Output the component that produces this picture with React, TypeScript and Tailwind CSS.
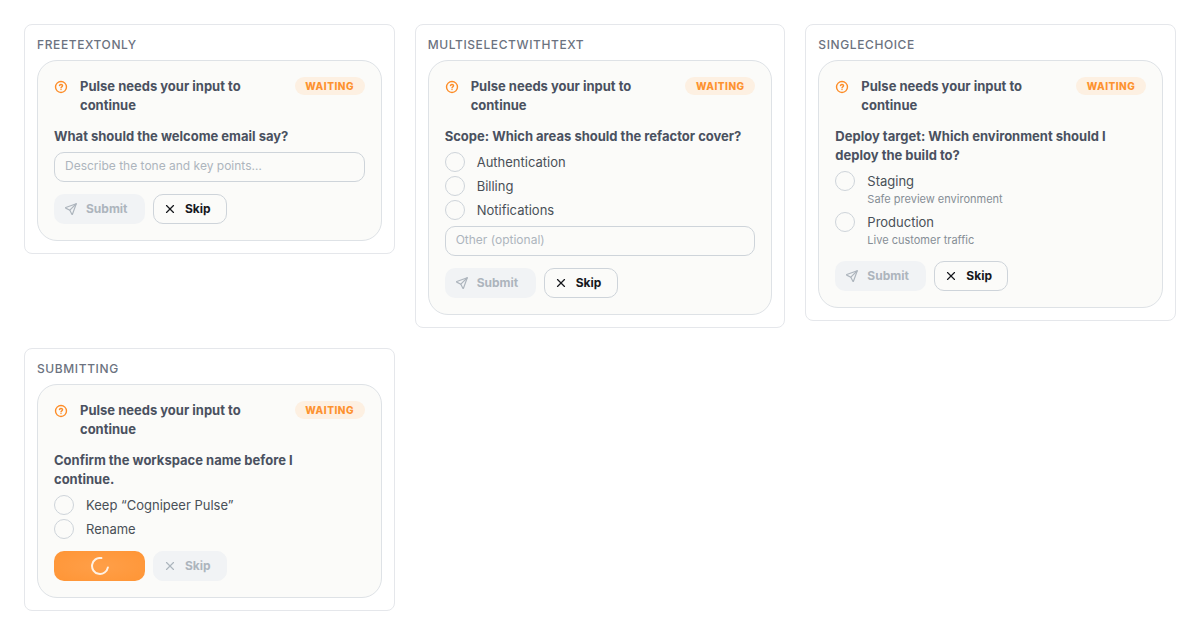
import { TbSend, TbX } from 'react-icons/tb'

type Option = {
  label: string
  description?: string
}

type Story = {
  name: string
  question: string
  multiple?: boolean
  options?: Option[]
  placeholder?: string
  submitting?: boolean
}

const stories: Story[] = [
  {
    name: 'FreeTextOnly',
    question: 'What should the welcome email say?',
    placeholder: 'Describe the tone and key points…',
  },
  {
    name: 'MultiSelectWithText',
    question: 'Scope: Which areas should the refactor cover?',
    multiple: true,
    options: [{ label: 'Authentication' }, { label: 'Billing' }, { label: 'Notifications' }],
    placeholder: 'Other (optional)',
  },
  {
    name: 'SingleChoice',
    question: 'Deploy target: Which environment should I deploy the build to?',
    options: [
      { label: 'Staging', description: 'Safe preview environment' },
      { label: 'Production', description: 'Live customer traffic' },
    ],
  },
  {
    name: 'Submitting',
    question: 'Confirm the workspace name before I continue.',
    options: [{ label: 'Keep “Cognipeer Pulse”' }, { label: 'Rename' }],
    submitting: true,
  },
]

function QuestionIcon() {
  return (
    <svg
      className="mt-[3px] mr-3 h-3.5 w-3.5 shrink-0 text-[#fd8c27]"
      viewBox="0 0 24 24"
      fill="none"
      stroke="currentColor"
      strokeWidth="2.4"
      strokeLinecap="round"
      strokeLinejoin="round"
      aria-hidden="true"
    >
      <circle cx="12" cy="12" r="9.4" />
      <path d="M9.4 9.6c.5-1.2 1.5-1.8 2.7-1.8 1.5 0 2.6.9 2.6 2.2 0 1.7-2.6 1.8-2.6 3.3" />
      <path d="M12 16.4v.01" />
    </svg>
  )
}

function Spinner() {
  return (
    <svg className="h-[18px] w-[18px]" viewBox="0 0 18 18" fill="none" aria-hidden="true">
      <path
        d="M16.9 10.4A8 8 0 1 1 10.4 1.1"
        stroke="#fff"
        strokeOpacity="0.85"
        strokeWidth="2"
        strokeLinecap="round"
      />
    </svg>
  )
}

function OptionRow({ story, option }: { story: Story; option: Option }) {
  const id = `${story.name}-${option.label}`
  return (
    <div className="flex items-start gap-3">
      <input
        id={id}
        type={story.multiple ? 'checkbox' : 'radio'}
        name={story.name}
        disabled={story.submitting}
        className="h-5 w-5 shrink-0 appearance-none rounded-full border border-[#ced4da] bg-transparent checked:border-[#fd8c27] checked:bg-[#fd8c27]"
      />
      <label htmlFor={id} className="text-[13px] leading-5 text-[#495057]">
        {option.label}
        {option.description && (
          <span className="block text-[11px] leading-[17px] text-[#868e96]">{option.description}</span>
        )}
      </label>
    </div>
  )
}

function InputCard({ story }: { story: Story }) {
  return (
    <form
      className="rounded-[20px] border border-[#dee2e6] bg-[#fbfbf9] p-4 text-[#4a5160]"
      onSubmit={(e) => e.preventDefault()}
    >
      <div className="flex items-start">
        <QuestionIcon />
        <h3 className="mr-2 flex-1 text-[13px] leading-[19px] font-bold">Pulse needs your input to continue</h3>
        <span className="flex h-[18px] w-[70px] shrink-0 items-center justify-center rounded-full bg-[#fdf0e2] text-[10px] font-extrabold tracking-wider text-[#fd922f]">
          WAITING
        </span>
      </div>

      <p id={`${story.name}-question`} className="mt-3 pr-3 text-[13px] leading-[19px] font-bold">
        {story.question}
      </p>

      {story.options && (
        <div className="mt-1.5 flex flex-col gap-1" role="group" aria-labelledby={`${story.name}-question`}>
          {story.options.map((option) => (
            <OptionRow key={option.label} story={story} option={option} />
          ))}
        </div>
      )}

      {story.placeholder && (
        <input
          type="text"
          aria-labelledby={`${story.name}-question`}
          placeholder={story.placeholder}
          className="mt-1.5 block h-[30px] w-full rounded-[10px] border border-[#ced4da] bg-transparent px-2.5 pb-1 text-xs placeholder:text-[#adb5bd]"
        />
      )}

      <div className="mt-3 flex gap-2 text-xs font-bold">
        {story.submitting ? (
          <button
            type="submit"
            disabled
            aria-label="Submitting"
            className="flex h-[30px] w-[91px] items-center justify-center rounded-[10px] bg-[#ff922f] bg-radial from-[#ff9f48] to-[#ff9535]"
          >
            <Spinner />
          </button>
        ) : (
          <button
            type="submit"
            disabled
            className="flex h-[30px] w-[91px] items-center gap-2 rounded-[10px] bg-[#f1f3f5] pl-2.5 text-[#adb5bd]"
          >
            <TbSend className="h-3.5 w-3.5" />
            Submit
          </button>
        )}
        <button
          type="button"
          disabled={story.submitting}
          className="flex h-[30px] w-[74px] items-center gap-2 rounded-[10px] border border-[#ced4da] pl-[9px] text-[#16181d] disabled:border-[#f1f3f5] disabled:bg-[#f1f3f5] disabled:text-[#adb5bd]"
        >
          <TbX className="h-3.5 w-3.5" />
          Skip
        </button>
      </div>
    </form>
  )
}

export default function App() {
  return (
    <main className="grid grid-cols-1 items-start gap-5 bg-white p-6 font-['Inter',sans-serif] sm:grid-cols-2 lg:grid-cols-3">
      {stories.map((story) => (
        <section key={story.name} className="rounded-lg border border-[#e5e7eb] p-3">
          <h2 className="mb-2 text-xs leading-[15px] font-medium tracking-wider text-[#6b7280] uppercase">
            {story.name}
          </h2>
          <InputCard story={story} />
        </section>
      ))}
    </main>
  )
}
